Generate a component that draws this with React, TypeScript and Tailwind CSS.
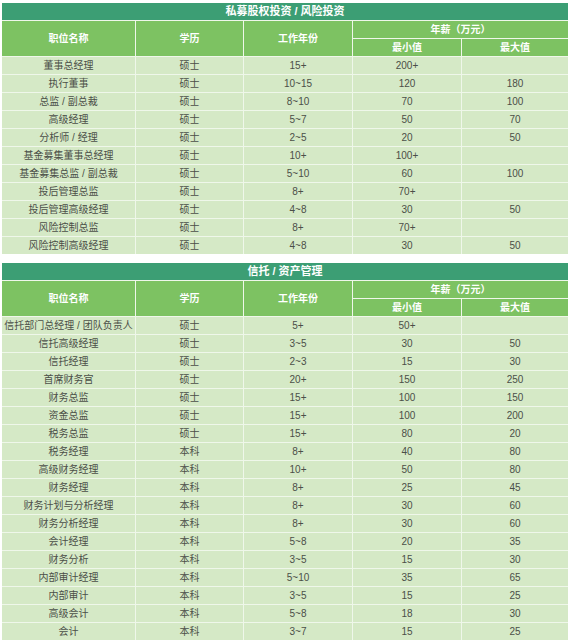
type Row = [string, string, string, string, string];

const peRows: Row[] = [
  ['董事总经理', '硕士', '15+', '200+', ''],
  ['执行董事', '硕士', '10~15', '120', '180'],
  ['总监 / 副总裁', '硕士', '8~10', '70', '100'],
  ['高级经理', '硕士', '5~7', '50', '70'],
  ['分析师 / 经理', '硕士', '2~5', '20', '50'],
  ['基金募集董事总经理', '硕士', '10+', '100+', ''],
  ['基金募集总监 / 副总裁', '硕士', '5~10', '60', '100'],
  ['投后管理总监', '硕士', '8+', '70+', ''],
  ['投后管理高级经理', '硕士', '4~8', '30', '50'],
  ['风险控制总监', '硕士', '8+', '70+', ''],
  ['风险控制高级经理', '硕士', '4~8', '30', '50'],
];

const trustRows: Row[] = [
  ['信托部门总经理 / 团队负责人', '硕士', '5+', '50+', ''],
  ['信托高级经理', '硕士', '3~5', '30', '50'],
  ['信托经理', '硕士', '2~3', '15', '30'],
  ['首席财务官', '硕士', '20+', '150', '250'],
  ['财务总监', '硕士', '15+', '100', '150'],
  ['资金总监', '硕士', '15+', '100', '200'],
  ['税务总监', '硕士', '15+', '80', '20'],
  ['税务经理', '本科', '8+', '40', '80'],
  ['高级财务经理', '本科', '10+', '50', '80'],
  ['财务经理', '本科', '8+', '25', '45'],
  ['财务计划与分析经理', '本科', '8+', '30', '60'],
  ['财务分析经理', '本科', '8+', '30', '60'],
  ['会计经理', '本科', '5~8', '20', '35'],
  ['财务分析', '本科', '3~5', '15', '30'],
  ['内部审计经理', '本科', '5~10', '35', '65'],
  ['内部审计', '本科', '3~5', '15', '25'],
  ['高级会计', '本科', '5~8', '18', '30'],
  ['会计', '本科', '3~7', '15', '25'],
];

const SalaryTable = ({ title, rows }: { title: string; rows: Row[] }) => {
  const head = 'bg-[#7dc262] text-white font-bold text-[10px] flex items-center justify-center';
  return (
    <div className="grid grid-cols-[133px_107px_108px_108px_106px] auto-rows-[17px] gap-px bg-[#eff7ea] w-[566px]">
      <div className="col-span-5 bg-[#3c9e74] text-white font-bold text-[11px] flex items-center justify-center">
        {title}
      </div>
      <div className={`${head} row-span-2`}>职位名称</div>
      <div className={`${head} row-span-2`}>学历</div>
      <div className={`${head} row-span-2`}>工作年份</div>
      <div className={`${head} col-span-2`}>年薪（万元）</div>
      <div className={head}>最小值</div>
      <div className={head}>最大值</div>
      {rows.map((r, i) =>
        r.map((cell, j) => (
          <div
            key={`${i}-${j}`}
            className="bg-[#d5e9c6] text-[#4b4f48] text-[10px] flex items-center justify-center whitespace-nowrap"
          >
            {cell}
          </div>
        ))
      )}
    </div>
  );
};

export default function App() {
  return (
    <div
      className="w-[572px] h-[642px] bg-white pt-[3px] pl-[2px] flex flex-col gap-[9px] overflow-hidden"
      style={{ fontFamily: '"Liberation Sans", "Noto Sans CJK SC", sans-serif' }}
    >
      <SalaryTable title="私募股权投资 / 风险投资" rows={peRows} />
      <SalaryTable title="信托 / 资产管理" rows={trustRows} />
    </div>
  );
}
